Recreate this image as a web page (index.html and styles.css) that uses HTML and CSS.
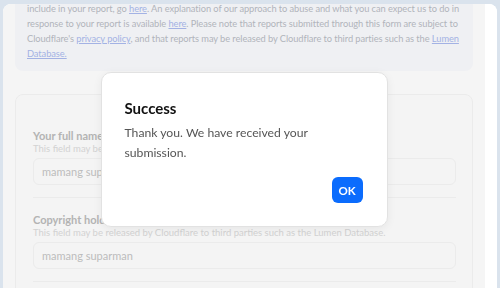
FILE: index.html
```html
<!DOCTYPE html>
<html lang="en">
<head>
<meta charset="utf-8">
<title>Report submitted</title>
<link rel="stylesheet" href="styles.css">
</head>
<body>
<div class="window">
  <main class="page">
    <section class="notice">
      include in your report, go <a href="#">here</a>. An explanation of our approach to abuse and what you can expect us to do in<br>
      response to your report is available <a href="#">here</a>. Please note that reports submitted through this form are subject to<br>
      Cloudflare's <a href="#">privacy policy</a>, and that reports may be released by Cloudflare to third parties such as the <a href="#">Lumen</a><br>
      <a href="#">Database.</a>
    </section>
    <form class="card">
      <div class="group">
        <label class="label">Your full name</label>
        <div class="hint">This field may be released by Cloudflare to third parties such as the Lumen Database.</div>
        <div class="input">mamang suparman</div>
      </div>
      <div class="group">
        <label class="label">Copyright holder's name</label>
        <div class="hint">This field may be released by Cloudflare to third parties such as the Lumen Database.</div>
        <div class="input">mamang suparman</div>
      </div>
    </form>
  </main>
  <div class="scrollbar"></div>
</div>

<div class="overlay">
  <div class="modal" role="dialog">
    <h2 class="modal-title">Success</h2>
    <p class="modal-text">Thank you. We have received your submission.</p>
    <div class="modal-actions">
      <button class="btn-ok" type="button">OK</button>
    </div>
  </div>
</div>
</body>
</html>
```

FILE: styles.css
```css
* { box-sizing: border-box; }

html, body {
  margin: 0;
  height: 288px;
  overflow: hidden;
}

body {
  background: #dae3ed;
  padding: 4px 3px 0 3px;
  font-family: Lato, "Liberation Sans", sans-serif;
}

.window {
  display: flex;
  height: 284px;
  border-radius: 8px 8px 0 0;
  overflow: hidden;
  background: #ffffff;
}

.page {
  flex: 1;
  background: #f5f5f5;
  padding: 0 12px;
  overflow: hidden;
}

.scrollbar {
  width: 12px;
  background: #ffffff;
}

.notice {
  margin-top: -15px;
  background: #eff0f3;
  border-radius: 8px;
  padding: 12px 12px 10px 12px;
  font-size: 9.3px;
  letter-spacing: -0.08px;
  line-height: 15px;
  color: #b1b4bb;
  white-space: nowrap;
}

.notice a {
  color: #a3b2e4;
  text-decoration: underline;
}

.card {
  margin-top: 23px;
  background: #f4f4f4;
  border: 1px solid #ebebeb;
  border-radius: 8px;
  padding: 19px 16px 0 17px;
  height: 300px;
}

.group {
  padding: 14px 0 12px;
  border-bottom: 1px solid #ebebeb;
}

.label {
  display: block;
  font-size: 11px;
  line-height: 15px;
  font-weight: 700;
  color: #b3b3b3;
}

.hint {
  font-size: 9.5px;
  line-height: 12px;
  color: #d2d2d2;
}

.input {
  margin-top: 3px;
  height: 27px;
  border: 1px solid #ebebeb;
  border-radius: 6px;
  padding: 0 8px;
  font-size: 11px;
  line-height: 25px;
  color: #bcbcbc;
}

.overlay {
  position: fixed;
  top: 0;
  left: 0;
  right: 12px;
  bottom: 0;
  display: flex;
  justify-content: center;
  align-items: flex-start;
  padding-top: 72px;
}

.modal {
  width: 287px;
  height: 155px;
  background: #ffffff;
  border: 1px solid #e2e2e2;
  border-radius: 10px;
  box-shadow: 0 2px 10px rgba(0, 0, 0, 0.06);
  padding: 25px 24px 23px 23px;
  display: flex;
  flex-direction: column;
}

.modal-title {
  margin: 0;
  font-size: 15px;
  line-height: 20px;
  font-weight: 700;
  color: #111111;
}

.modal-text {
  margin: 5px 0 0;
  font-size: 12.2px;
  line-height: 20px;
  color: #555555;
}

.modal-actions {
  margin-top: auto;
  display: flex;
  justify-content: flex-end;
}

.btn-ok {
  width: 31px;
  height: 26px;
  border: 0;
  border-radius: 6px;
  background: #0b6cfd;
  color: #ffffff;
  font-family: Lato, "Liberation Sans", sans-serif;
  font-size: 11.5px;
  font-weight: 700;
  padding: 0;
}
```
